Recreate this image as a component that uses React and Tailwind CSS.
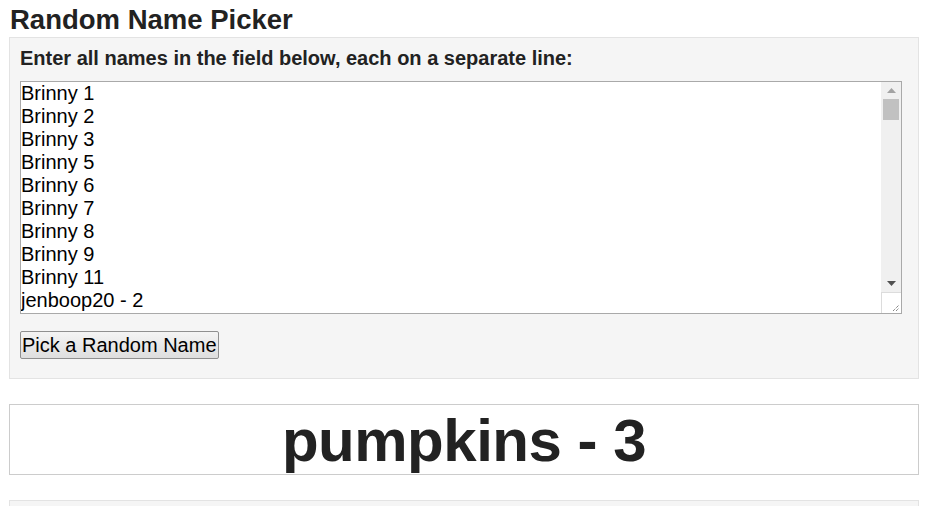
import { useState } from 'react'

const names = [
  'Brinny 1', 'Brinny 2', 'Brinny 3', 'Brinny 5', 'Brinny 6', 'Brinny 7', 'Brinny 8', 'Brinny 9', 'Brinny 11',
  'jenboop20 - 2', 'jenboop20 - 3', 'pumpkins - 1', 'pumpkins - 2', 'pumpkins - 3', 'pumpkins - 4',
  'Brinny 12', 'Brinny 13', 'Brinny 14', 'Brinny 15', 'Brinny 16', 'Brinny 17', 'Brinny 18', 'Brinny 19',
  'Brinny 20', 'Brinny 21', 'Brinny 22', 'Brinny 23', 'Brinny 24', 'Brinny 25', 'Brinny 26', 'Brinny 27',
  'Brinny 28', 'Brinny 29', 'Brinny 30', 'Brinny 31', 'Brinny 32', 'Brinny 33', 'Brinny 34', 'Brinny 35',
]

export default function App() {
  const [text, setText] = useState(names.join('\n'))
  const [picked, setPicked] = useState('pumpkins - 3')

  const pick = () => {
    const list = text.split('\n').filter(n => n.trim())
    if (list.length) setPicked(list[Math.floor(Math.random() * list.length)])
  }

  return (
    <div className="h-screen overflow-hidden bg-white px-[9px] text-[#222] font-['Liberation_Sans',Arial,sans-serif]">
      <h1 className="text-[27.5px] font-bold leading-[32px] pt-[4px] pl-[1px]">Random Name Picker</h1>
      <div className="mt-[1px] w-[910px] bg-[#f5f5f5] border border-[#e3e3e3] px-[10px] pt-[9px] pb-[19px]">
        <label className="block text-[20px] font-bold leading-[23px] mb-[11px]">
          Enter all names in the field below, each on a separate line:
        </label>
        <div className="flex w-[882px] h-[233px] border border-[#a9a9a9] bg-white">
          <textarea
            className="flex-1 h-full resize-none overflow-hidden outline-none text-[20px] leading-[23px] text-black pl-0 pt-[0px] font-['Liberation_Sans',Arial,sans-serif]"
            value={text}
            onChange={e => setText(e.target.value)}
          />
          <div className="w-[20px] flex flex-col bg-[#f0f0f0]">
            <div className="h-[17px] flex items-center justify-center">
              <svg width="9" height="5" viewBox="0 0 9 5"><path d="M4.5 0L9 5H0z" fill="#a3a3a3" /></svg>
            </div>
            <div className="mx-[2px] h-[21px] bg-[#c1c1c1]" />
            <div className="flex-1" />
            <div className="h-[17px] flex items-center justify-center">
              <svg width="9" height="5" viewBox="0 0 9 5"><path d="M0 0H9L4.5 5z" fill="#505050" /></svg>
            </div>
            <div className="h-[21px] bg-white border-t border-l border-[#dcdcdc] relative">
              <svg className="absolute right-[1px] bottom-[1px]" width="8" height="8" viewBox="0 0 8 8">
                <path d="M1 7L7 1M4 7L7 4" stroke="#555" strokeWidth="1" strokeDasharray="1 1" />
              </svg>
            </div>
          </div>
        </div>
        <button
          onClick={pick}
          className="mt-[17px] h-[28px] px-[1px] text-[20px] leading-[22px] text-black border border-[#8f8f8f] rounded-[2px] bg-gradient-to-b from-[#f4f4f4] to-[#dedede] font-['Liberation_Sans',Arial,sans-serif]"
        >
          Pick a Random Name
        </button>
      </div>
      <div className="mt-[25px] w-[910px] h-[71px] border border-[#cccccc] flex items-center justify-center">
        <span className="text-[60px] font-bold leading-none tracking-[-0.5px] text-[#222] mt-[2px]">{picked}</span>
      </div>
      <div className="mt-[25px] w-[910px] h-[40px] border border-[#e3e3e3] bg-[#f5f5f5]" />
    </div>
  )
}
